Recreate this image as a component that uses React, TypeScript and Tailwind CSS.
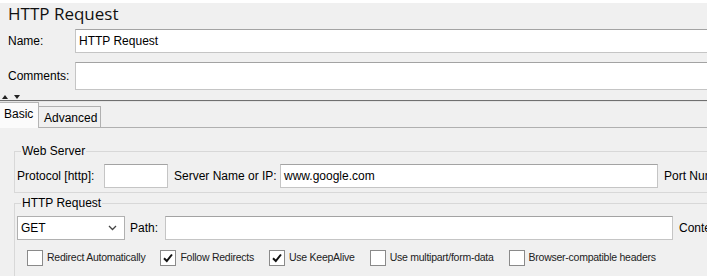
import React from 'react';

const font = { fontFamily: '"Liberation Sans", Arial, sans-serif' };

const TextBox = ({ value = '', className = '' }: { value?: string; className?: string }) => (
	<div
		className={`shrink-0 bg-white border border-[#c5c5c5] border-t-[#a3a3a3] flex items-center pl-[3px] text-[12px] text-black ${className}`}
	>
		{value}
	</div>
);

const Check = ({ checked, label }: { checked?: boolean; label: string }) => (
	<div className="flex items-center gap-[4px] shrink-0">
		<div className="w-[16px] h-[16px] bg-white border border-[#8a8a8a] flex items-center justify-center">
			{checked ? (
				<svg width="12" height="12" viewBox="0 0 12 12">
					<path d="M2 6.2 L4.8 9 L10 2.5" fill="none" stroke="#111" strokeWidth="2" />
				</svg>
			) : null}
		</div>
		<span className="text-[10.5px] tracking-[-0.25px] text-[#222] whitespace-nowrap">{label}</span>
	</div>
);

export default function App() {
	return (
		<div className="w-[718px] h-[276px] bg-white overflow-hidden text-black" style={font}>
			<div className="w-[707px] h-[276px] mt-[3px] bg-[#f0f0f0] overflow-hidden">
				<div className="h-[26px] pl-[8px] text-[17px] leading-[22px] text-[#111]" style={{ fontFamily: '"Open Sans", sans-serif' }}>
					HTTP Request
				</div>
				<div className="flex items-center h-[24px]">
					<span className="w-[75px] shrink-0 pl-[8px] text-[12px]">Name:</span>
					<TextBox value="HTTP Request" className="h-[24px] w-[640px]" />
				</div>
				<div className="flex items-center h-[28px] mt-[9px]">
					<span className="w-[75px] shrink-0 pl-[8px] text-[12px]">Comments:</span>
					<TextBox className="h-[28px] w-[640px]" />
				</div>
				<div className="h-[10px] flex items-end gap-[6px] pl-[2px] pb-[1px]">
					<svg width="6" height="4" viewBox="0 0 6 4">
						<path d="M0 4 L3 0 L6 4 Z" fill="#222" />
					</svg>
					<svg width="6" height="4" viewBox="0 0 6 4">
						<path d="M0 0 L6 0 L3 4 Z" fill="#222" />
					</svg>
				</div>
				<div className="h-[1px] bg-[#707070]" />
				<div className="h-[1px] bg-[#e4e4e4]" />
				<div className="flex items-end h-[26px]">
					<div className="h-[26px] w-[39px] bg-[#fbfbfb] border-t border-r border-[#b5b5b5] text-[12px] pl-[4px] pt-[4px] leading-[14px]">
						Basic
					</div>
					<div className="h-[22px] w-[62px] bg-[#f0f0f0] border-t border-r border-b border-[#b0b0b0] text-[12px] pl-[5px] pt-[4px] leading-[14px]">
						Advanced
					</div>
					<div className="flex-1 h-[1px] bg-[#b0b0b0]" />
				</div>
				<div className="w-[760px] pl-[14px] pt-[16px]">
					<fieldset className="border border-[#d8d8d8] px-[2px] pb-[4px]">
						<legend className="ml-[4px] px-[1px] text-[12px] leading-[14px]">Web Server</legend>
						<div className="flex items-center h-[24px] mt-[6px] text-[12px] whitespace-nowrap">
							<span className="w-[87px] shrink-0">Protocol [http]:</span>
							<TextBox className="h-[24px] w-[64px]" />
							<span className="ml-[6px] w-[106px] shrink-0">Server Name or IP:</span>
							<TextBox value="www.google.com" className="h-[24px] w-[378px]" />
							<span className="ml-[6px] shrink-0">Port Number:</span>
						</div>
					</fieldset>
					<fieldset className="border border-[#d8d8d8] px-[2px] pb-[10px] mt-[3px]">
						<legend className="ml-[4px] px-[1px] text-[12px] leading-[14px]">HTTP Request</legend>
						<div className="flex items-center h-[24px] mt-[6px] text-[12px] whitespace-nowrap">
							<div className="shrink-0 h-[24px] w-[108px] bg-white border border-[#b0b0b0] flex items-center justify-between pl-[3px] pr-[7px]">
								<span>GET</span>
								<svg width="9" height="6" viewBox="0 0 9 6">
									<path d="M1 1 L4.5 4.5 L8 1" fill="none" stroke="#444" strokeWidth="1.3" />
								</svg>
							</div>
							<span className="ml-[5px] w-[35px] shrink-0">Path:</span>
							<TextBox className="h-[24px] w-[508px]" />
							<span className="ml-[6px] shrink-0">Content encoding:</span>
						</div>
						<div className="flex items-center mt-[10px] pl-[10px] gap-[15px]">
							<Check label="Redirect Automatically" />
							<Check checked label="Follow Redirects" />
							<Check checked label="Use KeepAlive" />
							<Check label="Use multipart/form-data" />
							<Check label="Browser-compatible headers" />
						</div>
					</fieldset>
				</div>
			</div>
		</div>
	);
}
